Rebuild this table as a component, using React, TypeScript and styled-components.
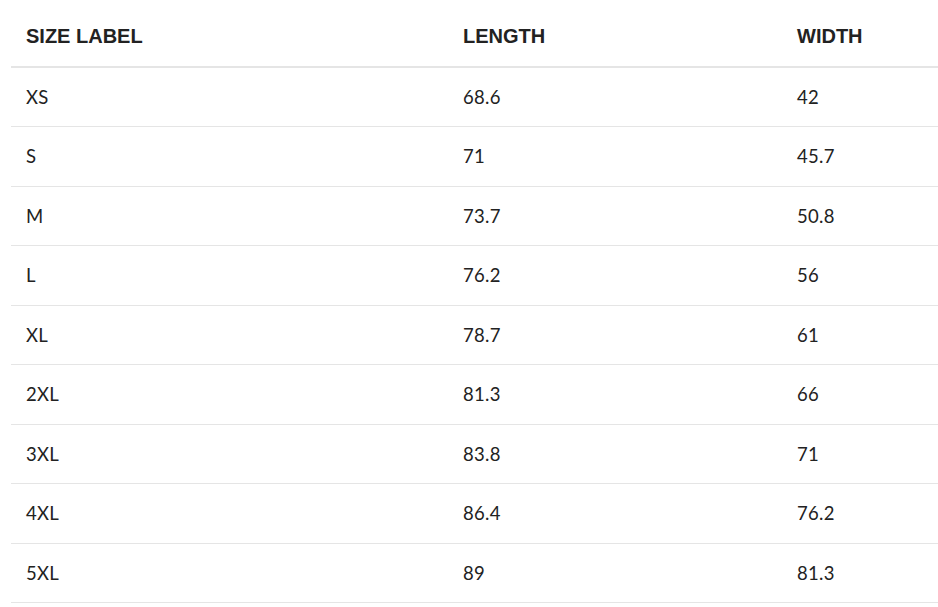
import React from "react";
import styled, { createGlobalStyle } from "styled-components";

const Global = createGlobalStyle`
  html, body { margin: 0; padding: 0; background: #fff; }
  body { font-family: Lato, "Open Sans", Arial, sans-serif; color: #222; }
`;

const Wrapper = styled.div`
  padding-left: 11px;
`;

const Table = styled.table`
  width: 927px;
  border-collapse: collapse;
  table-layout: fixed;
`;

const HeadCell = styled.th<{ $w: number }>`
  width: ${(p) => p.$w}px;
  height: 67px;
  padding: 6px 15px 0;
  text-align: left;
  vertical-align: middle;
  font-family: "Liberation Sans", Arial, sans-serif;
  font-weight: 700;
  font-size: 20px;
  color: #222;
  text-transform: uppercase;
  border-bottom: 2px solid #e5e5e5;
  box-sizing: border-box;
`;

const Row = styled.tr`
  height: 59.5px;
  border-bottom: 1px solid #e5e5e5;
`;

const Cell = styled.td`
  padding: 0 15px;
  vertical-align: middle;
  font-size: 18.5px;
  letter-spacing: 0.3px;
  color: #222;
`;

const rows: [string, string, string][] = [
  ["XS", "68.6", "42"],
  ["S", "71", "45.7"],
  ["M", "73.7", "50.8"],
  ["L", "76.2", "56"],
  ["XL", "78.7", "61"],
  ["2XL", "81.3", "66"],
  ["3XL", "83.8", "71"],
  ["4XL", "86.4", "76.2"],
  ["5XL", "89", "81.3"],
];

export default function App() {
  return (
    <>
      <Global />
      <Wrapper>
        <Table>
          <thead>
            <tr>
              <HeadCell $w={437}>Size Label</HeadCell>
              <HeadCell $w={334}>Length</HeadCell>
              <HeadCell $w={156}>Width</HeadCell>
            </tr>
          </thead>
          <tbody>
            {rows.map((r) => (
              <Row key={r[0]}>
                <Cell>{r[0]}</Cell>
                <Cell>{r[1]}</Cell>
                <Cell>{r[2]}</Cell>
              </Row>
            ))}
          </tbody>
        </Table>
      </Wrapper>
    </>
  );
}
